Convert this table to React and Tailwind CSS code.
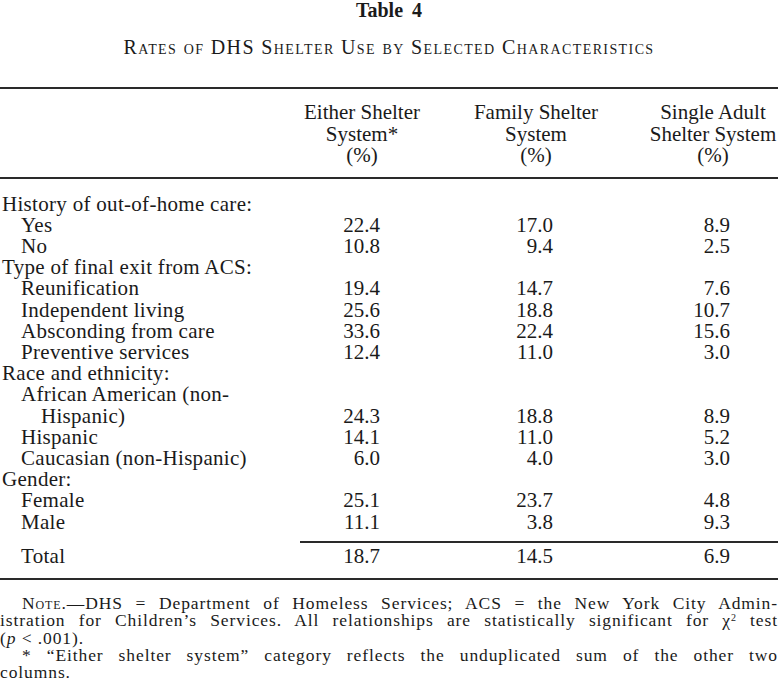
import React from 'react';

const ROWS = [
  { label: 'History of out-of-home care:', level: 0 },
  { label: 'Yes', level: 1, v: ['22.4', '17.0', '8.9'] },
  { label: 'No', level: 1, v: ['10.8', '9.4', '2.5'] },
  { label: 'Type of final exit from ACS:', level: 0 },
  { label: 'Reunification', level: 1, v: ['19.4', '14.7', '7.6'] },
  { label: 'Independent living', level: 1, v: ['25.6', '18.8', '10.7'] },
  { label: 'Absconding from care', level: 1, v: ['33.6', '22.4', '15.6'] },
  { label: 'Preventive services', level: 1, v: ['12.4', '11.0', '3.0'] },
  { label: 'Race and ethnicity:', level: 0 },
  { label: 'African American (non-', level: 1 },
  { label: 'Hispanic)', level: 2, v: ['24.3', '18.8', '8.9'] },
  { label: 'Hispanic', level: 1, v: ['14.1', '11.0', '5.2'] },
  { label: 'Caucasian (non-Hispanic)', level: 1, v: ['6.0', '4.0', '3.0'] },
  { label: 'Gender:', level: 0 },
  { label: 'Female', level: 1, v: ['25.1', '23.7', '4.8'] },
  { label: 'Male', level: 1, v: ['11.1', '3.8', '9.3'] },
];

const INDENT = ['pl-[2px]', 'pl-[21px]', 'pl-[41px]'];
const PAD = ['pr-[54px]', 'pr-[85px]', 'pr-[48px]'];

const Row = ({ label, level, v }) => (
  <>
    <div className={`${INDENT[level]} whitespace-nowrap tracking-[0.3px]`}>{label}</div>
    {[0, 1, 2].map(i => (
      <div key={i} className={`text-right ${PAD[i]}`}>{v ? v[i] : ''}</div>
    ))}
  </>
);

const Rule = () => <div className="h-[2px] bg-[#2a2a2a]" />;

export default function App() {
  return (
    <div className="w-[778px] h-[696px] bg-white text-[#1a1a1a] font-['Liberation_Serif','Times_New_Roman',serif] overflow-hidden">

      {/* Caption */}
      <div className="text-center text-[20px] leading-[20px] font-bold [word-spacing:4px]">Table 4</div>
      <div className="mt-[17px] text-center text-[20px] leading-[20px] [font-variant-caps:small-caps] tracking-[1.4px]">
        Rates of DHS Shelter Use by Selected Characteristics
      </div>

      <div className="mt-[30px]"><Rule /></div>

      {/* Header */}
      <div className="grid grid-cols-[290px_144px_204px_140px] text-[21px] leading-[21.5px] pt-[13px] pb-[10px]">
        <div />
        <div className="text-center">Either Shelter<br />System*<br />(%)</div>
        <div className="text-center">Family Shelter<br />System<br />(%)</div>
        <div className="text-center pl-[10px] whitespace-nowrap">Single Adult<br />Shelter System<br />(%)</div>
      </div>

      <Rule />

      {/* Body */}
      <div className="grid grid-cols-[290px_144px_204px_140px] text-[21px] leading-[21.2px] pt-[15px]">
        {ROWS.map((r, i) => <Row key={i} {...r} />)}
      </div>

      <div className="mt-[8px] ml-[300px]"><Rule /></div>

      <div className="grid grid-cols-[290px_144px_204px_140px] text-[21px] leading-[21.2px] pt-[3px] pb-[11px]">
        <Row label="Total" level={1} v={['18.7', '14.5', '6.9']} />
      </div>

      <Rule />

      {/* Notes */}
      <div className="pt-[15px] text-[17.5px] leading-[17.3px] tracking-[0.9px]">
        <div className="pl-[22px] text-justify [text-align-last:justify]">
          <span className="[font-variant-caps:small-caps]">Note.</span>—DHS = Department of Homeless Services; ACS = the New York City Admin-
        </div>
        <div className="text-justify [text-align-last:justify]">
          istration for Children’s Services. All relationships are statistically significant for χ<sup className="text-[10px] leading-[0]">2</sup> test
        </div>
        <div>(<i>p</i> &lt; .001).</div>
        <div className="pl-[22px] text-justify [text-align-last:justify]">
          * “Either shelter system” category reflects the unduplicated sum of the other two
        </div>
        <div>columns.</div>
      </div>

    </div>
  );
}
